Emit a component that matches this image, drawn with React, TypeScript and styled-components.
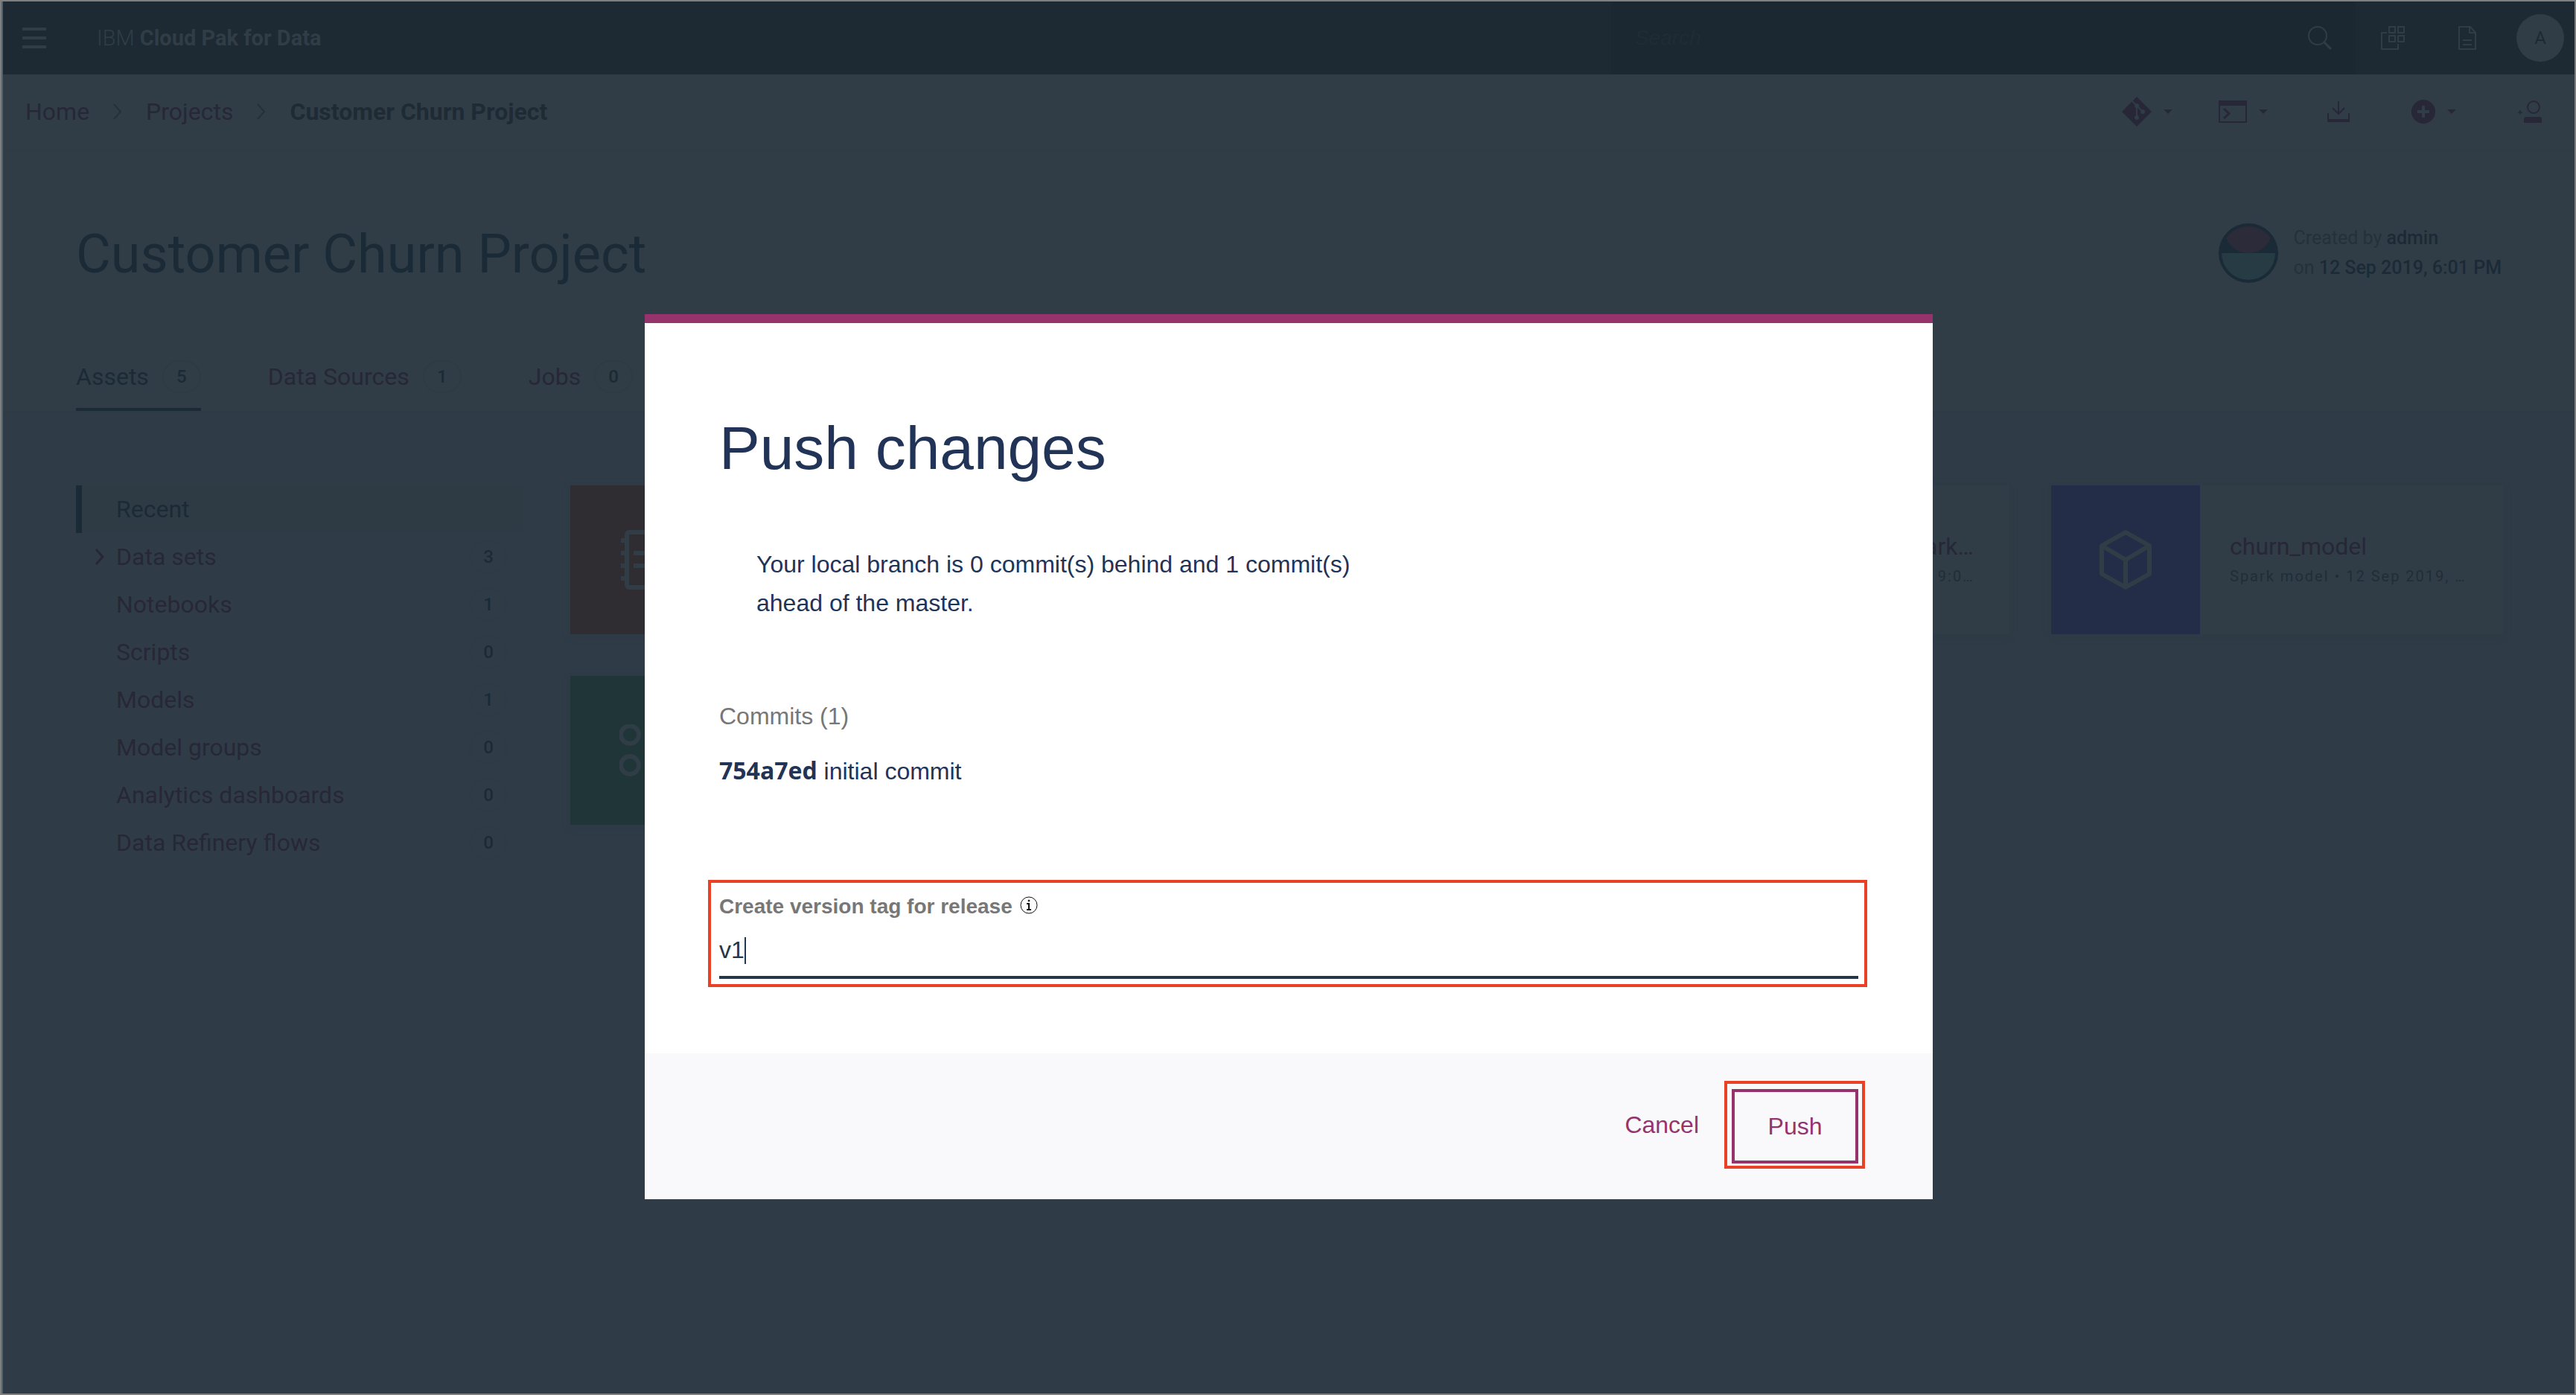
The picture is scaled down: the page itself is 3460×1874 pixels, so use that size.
import React from "react";
import styled, { createGlobalStyle } from "styled-components";

const ui = `Roboto, "Noto Sans", sans-serif`;
const helv = `"Liberation Sans", Arial, sans-serif`;

const c = {
  header: "#1d2a33",
  search: "#1b2831",
  paper: "#303d46",
  body: "#2f3c48",
  line: "#2e3b44",
  navy: "#1b2a37",
  link: "#272737",
  dim: "#24313b",
  frame: "#7f7f7f",
  magenta: "#96336c",
  mark: "#ea4025",
  ink: "#213458",
};

const GlobalStyle = createGlobalStyle`
  *, *::before, *::after { box-sizing: border-box; }
  body { margin: 0; background: ${c.body}; font-family: ${ui}; }
  button { font: inherit; color: inherit; background: none; border: 0; padding: 0; cursor: pointer; }
  a { color: inherit; text-decoration: none; }
  h1, h2, p, ul { margin: 0; padding: 0; }
  ul { list-style: none; }
`;

const Frame = styled.div`
  display: flex;
  min-height: 100vh;
  border: 2px solid ${c.frame};
`;

const Page = styled.div`
  flex: 1;
  min-width: 0;
  border-left: 2px solid #566068;
  background: ${c.body};
  color: ${c.navy};
  font-size: 32px;
  line-height: 40px;
`;

const Header = styled.header`
  display: flex;
  height: 98px;
  background: ${c.header};
  color: ${c.paper};
`;

const MenuButton = styled.button`
  display: flex;
  flex-direction: column;
  justify-content: center;
  gap: 8px;
  padding: 0 28px 0 26px;
`;

const MenuBar = styled.span`
  width: 32px;
  height: 4px;
  background: ${c.paper};
`;

const Brand = styled.div`
  flex: 1;
  padding-left: 40px;
  font-size: 29px;
  line-height: 98px;
  font-weight: 300;

  b { font-weight: 700; }
`;

const SearchBox = styled.label`
  display: flex;
  align-items: center;
  width: 1000px;
  padding: 0 32px;
  background: ${c.search};

  input {
    flex: 1;
    border: 0;
    outline: 0;
    padding: 0;
    background: none;
    font: italic 28px ${helv};
  }
  input::placeholder { color: #1f2c35; opacity: 1; }
`;

const HeaderCell = styled.button`
  display: grid;
  place-items: center;
  width: 100px;
`;

const UserCell = styled.div`
  display: flex;
  align-items: center;
  padding: 0 14px 0 16px;
`;

const Initial = styled.button`
  width: 64px;
  height: 64px;
  border-radius: 50%;
  background: ${c.paper};
  color: ${c.header};
  font-size: 24px;
`;

const SubBar = styled.div`
  display: flex;
  justify-content: space-between;
  align-items: center;
  height: 104px;
  padding: 0 44px 0 30px;
  border-bottom: 4px solid #2f3c45;
  background: ${c.paper};
`;

const Crumbs = styled.nav`
  display: flex;
  align-items: center;
  gap: 32px;
  color: ${c.link};

  svg { color: ${c.dim}; }
  strong { color: #1e2b35; font-weight: 700; }
`;

const Tools = styled.div`
  display: flex;
  align-items: center;
  color: ${c.link};
`;

const Tool = styled.button<{ $after: number }>`
  display: flex;
  align-items: center;
  gap: 16px;
  margin-right: ${(p) => p.$after}px;
`;

const Hero = styled.section`
  display: flex;
  justify-content: space-between;
  align-items: center;
  padding: 90px 98px 82px;
  background: ${c.paper};
`;

const Title = styled.h1`
  && { padding-top: 4px; }
  font-size: 72px;
  line-height: 88px;
  font-weight: 400;
`;

const Creator = styled.div`
  display: flex;
  gap: 20px;
  font-size: 25px;
  line-height: 40px;
  color: ${c.dim};

  b { color: ${c.navy}; font-weight: 500; }
`;

const Tabs = styled.div`
  display: flex;
  gap: 90px;
  padding: 0 98px;
  background: ${c.paper};
  border-bottom: 4px solid ${c.line};
`;

const Tab = styled.button<{ $active?: boolean }>`
  display: flex;
  align-items: center;
  gap: 18px;
  height: 84px;
  padding-bottom: 4px;
  border-bottom: 4px solid ${(p) => (p.$active ? c.navy : "transparent")};
  color: ${(p) => (p.$active ? c.navy : c.link)};
`;

const Badge = styled.span`
  width: 52px;
  height: 44px;
  border: 2px solid ${c.line};
  border-radius: 24px;
  text-align: center;
  color: ${c.navy};
  font-size: 24px;
  line-height: 40px;
  font-weight: 500;
`;

const Content = styled.main`
  display: flex;
  gap: 64px;
  padding: 96px 96px 0 98px;
`;

const Side = styled.ul`
  width: 600px;
`;

const SideItem = styled.li`
  a {
    display: flex;
    align-items: center;
    height: 64px;
    padding-right: 20px;
    border-left: 8px solid transparent;
    color: ${c.link};
  }
  a[aria-current] {
    border-left-color: ${c.navy};
    background: #2e3b44;
    color: ${c.navy};
  }
  span:nth-child(2) { flex: 1; }
`;

const Lead = styled.span`
  display: flex;
  width: 46px;
  padding-left: 18px;
`;

const Cards = styled.div`
  flex: 1;
  display: grid;
  grid-template-columns: repeat(4, minmax(0, 1fr));
  align-content: start;
  gap: 56px;
`;

const Card = styled.a`
  display: flex;
  height: 200px;
  background: ${c.paper};
  box-shadow: 0 2px 8px ${c.line};
`;

const Tile = styled.span<{ $bg: string }>`
  display: grid;
  place-items: center;
  flex: none;
  width: 200px;
  background: ${(p) => p.$bg};
  color: ${c.paper};
`;

const CardText = styled.span`
  flex: 1;
  min-width: 0;
  display: flex;
  flex-direction: column;
  justify-content: center;
  padding: 4px 40px 0;
`;

const CardName = styled.span`
  overflow: hidden;
  white-space: nowrap;
  text-overflow: ellipsis;
  color: ${c.link};
`;

const CardMeta = styled(CardName)`
  color: #202d38;
  font-size: 20px;
  letter-spacing: 2px;
`;

const Overlay = styled.div`
  position: absolute;
  inset: 0 0 0 2px;
  display: flex;
  justify-content: center;
  align-items: flex-start;
  padding-top: 422px;
`;

const Dialog = styled.form`
  width: 50vw;
  border-top: 12px solid ${c.magenta};
  background: #ffffff;
  color: ${c.ink};
  font-family: ${helv};
  font-size: 32px;
  line-height: 52px;
`;

const DialogBody = styled.div`
  padding: 120px 88px 89px 85px;
`;

const DialogTitle = styled.h2`
  && { padding: 0 15px; }
  font-size: 82px;
  line-height: 96px;
  font-weight: 400;
`;

const Notice = styled.p`
  && { margin-top: 82px; padding-left: 65px; }
  max-width: 960px;
`;

const Commits = styled.div`
  margin: 100px 0 120px;
  padding: 0 15px;
`;

const CommitsTitle = styled.p`
  color: #777777;
`;

const Commit = styled.p`
  && { margin-top: 22px; }

  b { font-family: "Open Sans", sans-serif; line-height: 32px; }
`;

const Field = styled.div`
  padding: 8px 8px 7px 11px;
  border: 4px solid ${c.mark};
`;

const FieldLabel = styled.label`
  display: flex;
  align-items: center;
  gap: 10px;
  color: #777777;
  font-size: 28px;
  line-height: 48px;
  font-weight: 700;
`;

const FieldRow = styled.div`
  position: relative;
`;

const TextInput = styled.input`
  display: block;
  width: 100%;
  height: 73px;
  padding: 0;
  border: 0;
  border-bottom: 4px solid #22374a;
  outline: 0;
  color: #22374a;
  background: none;
  font: 32px ${helv};
`;

const Caret = styled.span`
  position: absolute;
  left: 34px;
  top: 17px;
  width: 2px;
  height: 36px;
  background: #22374a;
`;

const Footer = styled.footer`
  display: flex;
  justify-content: flex-end;
  align-items: center;
  gap: 34px;
  height: 196px;
  padding: 0 91px 4px 0;
  background: #f9f9fb;
  color: ${c.magenta};
`;

const PushMark = styled.span`
  padding: 7px 5px 3px 6px;
  border: 4px solid ${c.mark};
`;

const PushButton = styled.button`
  display: block;
  width: 170px;
  height: 100px;
  border: 4px solid ${c.magenta};
`;

const Chevron = ({ w = 2 }: { w?: number }) => (
  <svg width="12" height="22" viewBox="0 0 12 22" fill="none" stroke="currentColor" strokeWidth={w} aria-hidden="true">
    <path d="M1 1l9 10-9 10" />
  </svg>
);

const Down = () => (
  <svg width="12" height="6" viewBox="0 0 12 6" fill="currentColor" aria-hidden="true">
    <path d="M0 0h12L6 6z" />
  </svg>
);

const SearchIcon = () => (
  <svg width="32" height="34" viewBox="0 0 32 34" fill="none" stroke={c.paper} strokeWidth="2" aria-hidden="true">
    <circle cx="13" cy="14" r="12" />
    <path d="M22 23l9 9" strokeWidth="3" />
  </svg>
);

const GridIcon = () => (
  <svg width="32" height="32" viewBox="0 0 32 32" fill="none" stroke="currentColor" strokeWidth="2" strokeLinejoin="round" aria-hidden="true">
    <path d="M8 9H1v22h22v-7M11 1h8v8h-8zM23 1h8v8h-8zM11 13h8v8h-8zM23 13h8v8h-8z" />
  </svg>
);

const DocIcon = () => (
  <svg width="24" height="32" viewBox="0 0 24 32" fill="none" stroke="currentColor" strokeWidth="2" strokeLinejoin="round" aria-hidden="true">
    <path d="M1 1h15l7 8v22H1zM15 1v8h8M6 19h12M6 25h12" />
  </svg>
);

const GitIcon = () => (
  <svg width="40" height="40" viewBox="0 0 40 40" aria-hidden="true">
    <path d="M20 0l20 20-20 20L0 20z" fill="currentColor" />
    <g stroke={c.paper} strokeWidth="2" fill={c.paper}>
      <path d="M13 5l7 7v16M20 12l8 8" fill="none" />
      <circle cx="20" cy="12" r="2" />
      <circle cx="28" cy="20" r="2" />
      <circle cx="20" cy="28" r="2" />
    </g>
  </svg>
);

const TerminalIcon = () => (
  <svg width="38" height="30" viewBox="0 0 38 30" fill="none" stroke="currentColor" strokeWidth="2" aria-hidden="true">
    <path d="M1 1h36v28H1z" />
    <path d="M0 3.500h38" strokeWidth="7" />
    <path d="M7 11l7 6.500L7 24" strokeWidth="3" />
  </svg>
);

const DownloadIcon = () => (
  <svg width="30" height="28" viewBox="0 0 30 28" fill="none" stroke="currentColor" strokeWidth="2" aria-hidden="true">
    <path d="M15 0v17M7 9l8 8 8-8M1 16v11h28V16" />
    <path d="M1 26h28" strokeWidth="4" />
  </svg>
);

const AddIcon = () => (
  <svg width="32" height="32" viewBox="0 0 32 32" aria-hidden="true">
    <circle cx="16" cy="16" r="16" fill="currentColor" />
    <path d="M16 8v16M8 16h16" stroke={c.paper} strokeWidth="4" />
  </svg>
);

const AddUserIcon = () => (
  <svg width="32" height="30" viewBox="0 0 32 30" fill="none" stroke="currentColor" strokeWidth="2" aria-hidden="true">
    <circle cx="21" cy="9" r="8" />
    <path d="M0 16h6M3 13v6" strokeWidth="1.500" />
    <path d="M8 30v-5q0-3 3-3h18q3 0 3 3v5z" fill="currentColor" stroke="none" />
  </svg>
);

const Portrait = () => (
  <svg width="80" height="80" viewBox="0 0 80 80" aria-hidden="true">
    <clipPath id="disc"><circle cx="40" cy="40" r="36" /></clipPath>
    <circle cx="40" cy="40" r="40" fill={c.navy} />
    <g clipPath="url(#disc)">
      <path d="M0 40h80v40H0z" fill="#263b43" />
      <circle cx="40" cy="8" r="32" fill="#2c2b3a" />
    </g>
  </svg>
);

const NotebookIcon = () => (
  <svg width="64" height="80" viewBox="0 0 64 80" fill="none" stroke="currentColor" strokeWidth="6" aria-hidden="true">
    <rect x="8" y="3" width="53" height="74" rx="3" />
    <path d="M0 14h8M0 31h8M0 48h8M0 65h8M17 31h34M17 48h34" />
  </svg>
);

const DataIcon = () => (
  <svg width="68" height="70" viewBox="0 0 68 70" fill="none" stroke="currentColor" strokeWidth="6" aria-hidden="true">
    <circle cx="14" cy="14" r="12" />
    <circle cx="14" cy="55" r="12" />
    <path d="M36 14h30M36 55h30" />
  </svg>
);

const CubeIcon = () => (
  <svg width="70" height="80" viewBox="0 0 70 80" fill="none" stroke="currentColor" strokeWidth="6" strokeLinejoin="round" aria-hidden="true">
    <path d="M35 3l32 18v38L35 77 3 59V21zM3 21l32 19 32-19M35 40v37" />
  </svg>
);

const InfoIcon = () => (
  <svg width="24" height="28" viewBox="0 0 24 28" fill="none" stroke="#111111" aria-hidden="true">
    <circle cx="12" cy="12" r="11" strokeWidth="1" />
    <path d="M9 10h3v8M9 18h6" strokeWidth="2" />
    <circle cx="12" cy="6" r="1" strokeWidth="1" fill="#111111" />
  </svg>
);

const tabs = [
  { name: "Assets", count: 5 },
  { name: "Data Sources", count: 1 },
  { name: "Jobs", count: 0 },
];

const groups = [
  { name: "Recent" },
  { name: "Data sets", count: 3 },
  { name: "Notebooks", count: 1 },
  { name: "Scripts", count: 0 },
  { name: "Models", count: 1 },
  { name: "Model groups", count: 0 },
  { name: "Analytics dashboards", count: 0 },
  { name: "Data Refinery flows", count: 0 },
];

const green = "#1f3538";
const cards = [
  { id: "notebook", bg: "#2f2d31", icon: <NotebookIcon /> },
  { id: "customers", bg: green, icon: <DataIcon /> },
  { id: "spark", name: "customer_test_spark.json", meta: "Data sets • 12 Sep 2019, 9:02 PM", bg: green, icon: <DataIcon /> },
  { id: "model", name: "churn_model", meta: "Spark model • 12 Sep 2019, 6:08 PM", bg: "#232d47", icon: <CubeIcon /> },
  { id: "churn", bg: green, icon: <DataIcon /> },
];

export default function App() {
  return (
    <>
      <GlobalStyle />
      <Frame>
        <Page>
          <Header>
            <MenuButton aria-label="Menu"><MenuBar /><MenuBar /><MenuBar /></MenuButton>
            <Brand>IBM <b>Cloud Pak for Data</b></Brand>
            <SearchBox>
              <input type="search" placeholder="Search" aria-label="Search" />
              <SearchIcon />
            </SearchBox>
            <HeaderCell aria-label="Services"><GridIcon /></HeaderCell>
            <HeaderCell aria-label="Documents"><DocIcon /></HeaderCell>
            <UserCell><Initial>A</Initial></UserCell>
          </Header>
          <SubBar>
            <Crumbs aria-label="Breadcrumb">
              <a href="#home">Home</a>
              <Chevron />
              <a href="#projects">Projects</a>
              <Chevron />
              <strong>Customer Churn Project</strong>
            </Crumbs>
            <Tools>
              <Tool $after={62} aria-label="Git"><GitIcon /><Down /></Tool>
              <Tool $after={80} aria-label="Terminal"><TerminalIcon /><Down /></Tool>
              <Tool $after={83} aria-label="Download"><DownloadIcon /></Tool>
              <Tool $after={83} aria-label="Add"><AddIcon /><Down /></Tool>
              <Tool $after={0} aria-label="Add collaborator"><AddUserIcon /></Tool>
            </Tools>
          </SubBar>
          <Hero>
            <Title>Customer Churn Project</Title>
            <Creator>
              <Portrait />
              <p>Created by <b>admin</b><br />on <b>12 Sep 2019, 6:01 PM</b></p>
            </Creator>
          </Hero>
          <Tabs role="tablist">
            {tabs.map((t, i) => (
              <Tab key={t.name} role="tab" aria-selected={i === 0} $active={i === 0}>
                {t.name}<Badge>{t.count}</Badge>
              </Tab>
            ))}
          </Tabs>
          <Content>
            <Side>
              {groups.map((g) => (
                <SideItem key={g.name}>
                  <a href="#assets" aria-current={g.name === "Recent" || undefined}>
                    <Lead>{g.name === "Data sets" && <Chevron w={3} />}</Lead>
                    <span>{g.name}</span>
                    {g.count !== undefined && <Badge>{g.count}</Badge>}
                  </a>
                </SideItem>
              ))}
            </Side>
            <Cards>
              {cards.map((k) => (
                <Card key={k.id} href={`#${k.id}`}>
                  <Tile $bg={k.bg}>{k.icon}</Tile>
                  {k.name && (
                    <CardText>
                      <CardName>{k.name}</CardName>
                      <CardMeta>{k.meta}</CardMeta>
                    </CardText>
                  )}
                </Card>
              ))}
            </Cards>
          </Content>
        </Page>
      </Frame>
      <Overlay>
        <Dialog role="dialog" aria-labelledby="push-title" onSubmit={(e) => e.preventDefault()}>
          <DialogBody>
            <DialogTitle id="push-title">Push changes</DialogTitle>
            <Notice>Your local branch is 0 commit(s) behind and 1 commit(s) <br />ahead of the master.</Notice>
            <Commits>
              <CommitsTitle>Commits (1)</CommitsTitle>
              <Commit><b>754a7ed</b> initial commit</Commit>
            </Commits>
            <Field>
              <FieldLabel htmlFor="version-tag">Create version tag for release <InfoIcon /></FieldLabel>
              <FieldRow>
                <TextInput id="version-tag" defaultValue="v1" />
                <Caret />
              </FieldRow>
            </Field>
          </DialogBody>
          <Footer>
            <button type="button">Cancel</button>
            <PushMark><PushButton type="submit">Push</PushButton></PushMark>
          </Footer>
        </Dialog>
      </Overlay>
    </>
  );
}
